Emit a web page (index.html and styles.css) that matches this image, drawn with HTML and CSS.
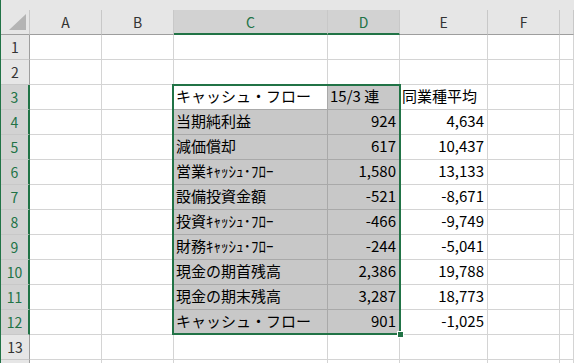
FILE: index.html
```html
<!DOCTYPE html>
<html lang="ja">
<head>
  <meta charset="UTF-8" />
  <title>Cash Flow Sheet</title>
  <link rel="stylesheet" href="styles.css">
</head>
<body>

  <div class="sheet">
    <div class="topband"></div>
    <div class="grid" id="grid"></div>
    <div class="selection"></div>
    <div class="fill-handle"></div>
  </div>

  <script>
    const columns = ["A", "B", "C", "D", "E", "F", ""];
    const rows = {
      3: ["キャッシュ・フロー", "15/3 連", "同業種平均"],
      4: ["当期純利益", "924", "4,634"],
      5: ["減価償却", "617", "10,437"],
      6: ["営業ｷｬｯｼｭ･ﾌﾛｰ", "1,580", "13,133"],
      7: ["設備投資金額", "-521", "-8,671"],
      8: ["投資ｷｬｯｼｭ･ﾌﾛｰ", "-466", "-9,749"],
      9: ["財務ｷｬｯｼｭ･ﾌﾛｰ", "-244", "-5,041"],
      10: ["現金の期首残高", "2,386", "19,788"],
      11: ["現金の期末残高", "3,287", "18,773"],
      12: ["キャッシュ・フロー", "901", "-1,025"]
    };

    const grid = document.getElementById("grid");

    function addCell(cls, text) {
      const div = document.createElement("div");
      div.className = "cell " + cls;
      div.textContent = text || "";
      grid.appendChild(div);
      return div;
    }

    // column headers
    const corner = addCell("col-head corner", "");
    corner.innerHTML = '<svg width="28" height="24" viewBox="0 0 28 24"><polygon points="8,20 25,20 25,4" fill="#b4b4b4"/></svg>';
    columns.forEach(c => {
      const sel = c === "C" || c === "D";
      addCell("col-head" + (sel ? " sel" : ""), c);
    });

    // rows (row 14 only peeks in at the bottom, so no label)
    for (let r = 1; r <= 14; r++) {
      const inSel = r >= 3 && r <= 12;
      addCell("row-head" + (inSel ? " sel" : ""), r < 14 ? r : "");
      const vals = rows[r] || [];
      columns.forEach(c => {
        let cls = "";
        let text = "";
        if (c === "C") text = vals[0];
        if (c === "D") { text = vals[1]; cls = r > 3 ? "num" : ""; }
        if (c === "E") { text = vals[2]; cls = r > 3 ? "num" : ""; }
        if (inSel && (c === "C" || c === "D") && !(r === 3 && c === "C")) cls += " shade";
        if (inSel && r === 3 && c === "C") cls += " active";
        addCell(cls, text);
      });
    }
  </script>

</body>
</html>
```

FILE: styles.css
```css
* { box-sizing: border-box; margin: 0; padding: 0; }
html, body { height: 363px; overflow: hidden; }
body { font-family: "Noto Sans CJK JP", sans-serif; background: #fff; color: #000; }
.sheet { position: relative; height: 363px; overflow: hidden; border-left: 1px solid #217346; }
.topband { height: 10px; background: #e6e6e6; }

.grid {
  display: grid;
  grid-template-columns: 29px 72px 72px 154px 72px 88px 72px 1fr;
  grid-auto-rows: 25px;
}
.cell {
  display: flex;
  align-items: flex-end;
  padding: 0 3px 4px 2px;
  border-right: 1px solid #d4d4d4;
  border-bottom: 1px solid #d4d4d4;
  font-size: 15px;
  line-height: 18px;
  white-space: nowrap;
  overflow: hidden;
}
.cell.num { justify-content: flex-end; }
.cell.shade { background: #c8c8c8; border-color: #a9a9a9; }
.cell.active { border-color: #a9a9a9; }

/* headers */
.col-head, .row-head {
  align-items: center;
  justify-content: center;
  padding: 0;
  background: #e6e6e6;
  color: #333;
  font-size: 14px;
}
.col-head { border-right-color: #c8c8c8; border-bottom-color: #9e9e9e; }
.col-head.sel { background: #d2d2d2; color: #217346; border-bottom: 2px solid #217346; }
.corner { align-items: flex-start; justify-content: flex-start; }
.corner svg { display: block; }
.row-head { border-right-color: #9e9e9e; border-bottom-color: #c8c8c8; }
.row-head.sel { background: #d2d2d2; color: #217346; border-right: 2px solid #217346; }

/* selection overlay */
.selection {
  position: absolute;
  left: 171px;
  top: 84px;
  width: 229px;
  height: 251px;
  border: 2px solid #217346;
  pointer-events: none;
}
.fill-handle {
  position: absolute;
  left: 396px;
  top: 331px;
  width: 7px;
  height: 7px;
  background: #217346;
  border: 1px solid #fff;
}
```
